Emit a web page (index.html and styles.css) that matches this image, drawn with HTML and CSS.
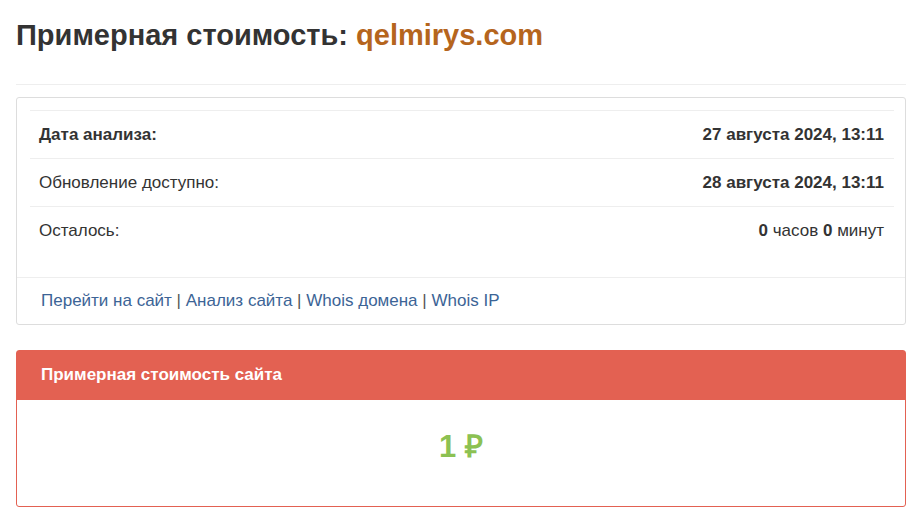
FILE: index.html
```html
<!DOCTYPE html>
<html lang="ru">
<head>
    <meta charset="UTF-8">
    <meta name="viewport" content="width=device-width, initial-scale=1.0">
    <title>Примерная стоимость: qelmirys.com</title>
    <link rel="stylesheet" href="styles.css">
</head>
<body>
    <main class="content">
        <!-- Заголовок -->
        <h1 class="page-title">Примерная стоимость: <span class="domain">qelmirys.com</span></h1>

        <!-- Информация об анализе -->
        <div class="panel">
            <div class="panel-body">
                <table class="info-table">
                    <tr>
                        <td><b>Дата анализа:</b></td>
                        <td class="right"><b>27 августа 2024, 13:11</b></td>
                    </tr>
                    <tr>
                        <td>Обновление доступно:</td>
                        <td class="right"><b>28 августа 2024, 13:11</b></td>
                    </tr>
                    <tr>
                        <td>Осталось:</td>
                        <td class="right"><b>0</b> часов <b>0</b> минут</td>
                    </tr>
                </table>
            </div>
            <div class="panel-footer">
                <a href="#">Перейти на сайт</a> | <a href="#">Анализ сайта</a> | <a href="#">Whois домена</a> | <a href="#">Whois IP</a>
            </div>
        </div>

        <!-- Стоимость -->
        <div class="panel panel-red">
            <div class="panel-heading">Примерная стоимость сайта</div>
            <div class="price">1 ₽</div>
        </div>
    </main>
</body>
</html>
```

FILE: styles.css
```css
body {
    margin: 0;
    font-family: "Liberation Sans", Arial, sans-serif;
    font-size: 17px;
    line-height: 22.5px;
    color: #333;
    background-color: #fff;
}

.content {
    padding: 0 7px 0 16px;
}

.page-title {
    margin: 20px 0 12px;
    padding-bottom: 32px;
    border-bottom: 1px solid #eee;
    font-size: 29px;
    line-height: 1.1;
    font-weight: bold;
    color: #333;
}

.page-title .domain {
    color: #b5651d;
}

.panel {
    border: 1px solid #ddd;
    border-radius: 3px;
    margin-bottom: 25px;
    background-color: #fff;
}

.panel-body {
    padding: 12px 11px 23px 13px;
}

.info-table {
    width: 100%;
    border-collapse: collapse;
}

.info-table td {
    padding: 12px 10px 12px 9px;
    line-height: 23px;
    border-top: 1px solid #eee;
}

.info-table .right {
    text-align: right;
}

.panel-footer {
    padding: 12px 24px;
    border-top: 1px solid #eee;
    color: #555;
}

.panel-footer a {
    color: #3c6496;
    text-decoration: none;
}

/* Красная панель */
.panel-red {
    border-color: #e36152;
}

.panel-red .panel-heading {
    background-color: #e36152;
    color: #fff;
    font-weight: bold;
    padding: 13px 24px 13.5px;
}

.price {
    padding: 30px 0 42px;
    text-align: center;
    font-size: 31px;
    font-weight: bold;
    line-height: 34px;
    color: #8cc152;
}
```
